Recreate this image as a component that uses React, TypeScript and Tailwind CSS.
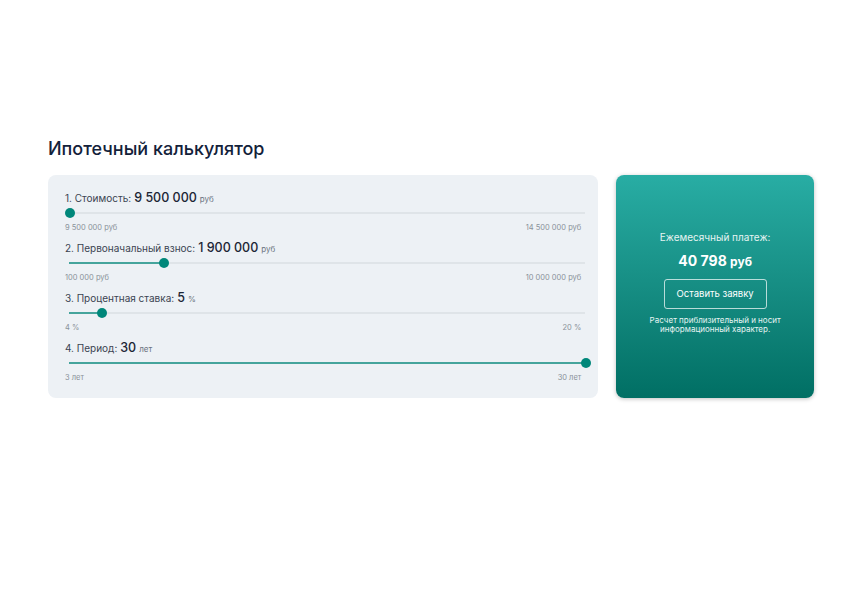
import React from "react";

type Row = {
  label: string;
  value: string;
  unit: string;
  min: number;
  max: number;
  current: number;
  minLabel: string;
  maxLabel: string;
};

const rows: Row[] = [
  { label: "1. Стоимость:", value: "9 500 000", unit: "руб", min: 9500000, max: 14500000, current: 9500000, minLabel: "9 500 000 руб", maxLabel: "14 500 000 руб" },
  { label: "2. Первоначальный взнос:", value: "1 900 000", unit: "руб", min: 100000, max: 10000000, current: 1900000, minLabel: "100 000 руб", maxLabel: "10 000 000 руб" },
  { label: "3. Процентная ставка:", value: "5", unit: "%", min: 4, max: 20, current: 5, minLabel: "4 %", maxLabel: "20 %" },
  { label: "4. Период:", value: "30", unit: "лет", min: 3, max: 30, current: 30, minLabel: "3 лет", maxLabel: "30 лет" },
];

function Slider({ row }: { row: Row }) {
  const pct = ((row.current - row.min) / (row.max - row.min)) * 100;
  return (
    <div className="h-[50px]">
      <div className="flex items-baseline h-[18px] text-[10px] text-[#3b4452]">
        <span>{row.label}</span>
        <span className="ml-[3px] text-[12.5px] font-medium text-[#1c2636]">{row.value}</span>
        <span className="ml-[3px] text-[8px] text-[#6b7380]">{row.unit}</span>
      </div>
      <div className="relative ml-[4px] -mr-[4px] h-[10px] mt-[1px]">
        <div className="absolute left-0 right-0 top-[4px] h-[2px] bg-[#dfe4e8]" />
        <div className="absolute left-0 top-[4px] h-[2px] bg-[#45a49c]" style={{ width: `${pct}%` }} />
        <div
          className="absolute top-0 w-[10px] h-[10px] -ml-[5px] rounded-full bg-[#00877a]"
          style={{ left: `calc(${pct}% + 1px)` }}
        />
      </div>
      <div className="flex justify-between mt-[4px] text-[7.5px] text-[#8a919a]">
        <span>{row.minLabel}</span>
        <span>{row.maxLabel}</span>
      </div>
    </div>
  );
}

export default function App() {
  return (
    <div className="w-[860px] h-[600px] bg-white" style={{ fontFamily: "Inter, 'Noto Sans', sans-serif" }}>
      <div className="pt-[137px] pl-[48px] pr-[46px]">
        <h1 className="text-[18px] leading-[24px] font-medium text-[#13213a]">Ипотечный калькулятор</h1>
        <div className="flex gap-[18px] mt-[14px] h-[223px]">
          <div className="w-[551px] bg-[#edf1f5] rounded-[8px] pt-[14px] pl-[17px] pr-[17px]">
            {rows.map((r) => (
              <Slider key={r.label} row={r} />
            ))}
          </div>
          <div className="w-[198px] rounded-[8px] bg-gradient-to-b from-[#28ada4] to-[#016f64] shadow-[0_1px_4px_rgba(0,0,0,0.25)] flex flex-col items-center text-white pt-[55px]">
            <div className="text-[10px] leading-[14px] text-[#e6f4f2]">Ежемесячный платеж:</div>
            <div className="mt-[8px] text-[14px] leading-[18px] font-bold">
              40 798 <span className="text-[12px]">руб</span>
            </div>
            <div className="mt-[8px] w-[103px] h-[30px] border border-white/70 rounded-[3px] flex items-center justify-center text-[9.5px]">
              Оставить заявку
            </div>
            <div className="mt-[7px] text-[8px] leading-[9px] text-center text-[#e6f4f2]">
              Расчет приблизительный и носит
              <br />
              информационный характер.
            </div>
          </div>
        </div>
      </div>
    </div>
  );
}
